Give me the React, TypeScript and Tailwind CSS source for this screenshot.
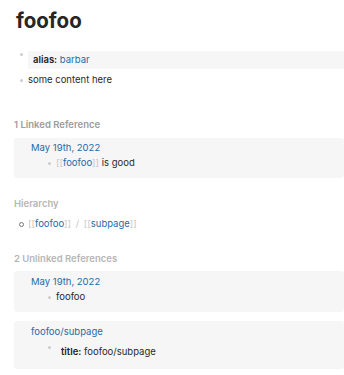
import React from 'react';

const LINK = 'text-[#1f6ba6]';

const Dot = () => (
  <div className="w-[14px] flex justify-center shrink-0">
    <div className="w-[3px] h-[3px] rounded-full bg-[#cdcdcd]"></div>
  </div>
);

const Ref = ({ name }: { name: string }) => (
  <span>
    <span className="text-[#c8c8c8]">[[</span>
    <span className={LINK}>{name}</span>
    <span className="text-[#c8c8c8]">]]</span>
  </span>
);

const App: React.FC = () => {
  return (
    <div
      className="w-[344px] h-[375px] bg-white overflow-hidden pl-[14px] text-[9.5px] text-[#2a2a2a]"
      style={{ fontFamily: 'Inter, "Noto Sans", sans-serif' }}
    >
      {/* Page title */}
      <h1 className="pt-[8px] ml-[2px] text-[20.5px] leading-[26px] font-bold text-[#262626]">foofoo</h1>

      {/* Page blocks */}
      <div className="mt-[17px] flex items-start">
        <div className="mt-[2px]"><Dot /></div>
        <div className="flex-1 h-[18px] leading-[18px] pl-[5px] bg-[#f6f6f6]">
          <span className="font-semibold text-[#222]">alias:</span> <span className={LINK}>barbar</span>
        </div>
      </div>
      <div className="mt-[5px] flex items-center leading-[12px]">
        <Dot />
        <span>some content here</span>
      </div>

      {/* Linked references */}
      <div className="mt-[33px] leading-[12px] font-semibold text-[#9c9c9c]">1 Linked Reference</div>
      <div className="mt-[7px] rounded-[3px] bg-[#f6f6f6] pt-[4px] pb-[9px] leading-[12px]">
        <div className={`pl-[17px] text-[9.5px] ${LINK}`}>May 19th, 2022</div>
        <div className="mt-[3px] pl-[28px] flex items-center">
          <Dot />
          <span><Ref name="foofoo" /> is good</span>
        </div>
      </div>

      {/* Hierarchy */}
      <div className="mt-[20px] leading-[12px] font-semibold text-[#b6b6b6]">Hierarchy</div>
      <div className="mt-[8px] flex items-center leading-[12px]">
        <div className="w-[14px] flex justify-center shrink-0">
          <div className="w-[5px] h-[5px] rounded-full border border-[#777]"></div>
        </div>
        <span>
          <Ref name="foofoo" /> <span className="text-[#c8c8c8] px-[2px]">/</span> <Ref name="subpage" />
        </span>
      </div>

      {/* Unlinked references */}
      <div className="mt-[23px] leading-[12px] font-semibold text-[#b6b6b6]">2 Unlinked References</div>
      <div className="mt-[6px] rounded-[3px] bg-[#f6f6f6] pt-[5px] pb-[9px] leading-[12px]">
        <div className={`pl-[17px] text-[9.5px] ${LINK}`}>May 19th, 2022</div>
        <div className="mt-[3px] pl-[28px] flex items-center">
          <Dot />
          <span>foofoo</span>
        </div>
      </div>
      <div className="mt-[9px] rounded-[3px] bg-[#f6f6f6] pt-[5px] pb-[8px]">
        <div className={`pl-[17px] leading-[12px] text-[9.5px] ${LINK}`}>foofoo/subpage</div>
        <div className="mt-[5px] pl-[28px] flex items-start">
          <div className="mt-[3px]"><Dot /></div>
          <div className="flex-1 h-[18px] leading-[18px] pl-[5px]">
            <span className="font-semibold text-[#222]">title:</span> foofoo/subpage
          </div>
        </div>
      </div>
    </div>
  );
};

export default App;
